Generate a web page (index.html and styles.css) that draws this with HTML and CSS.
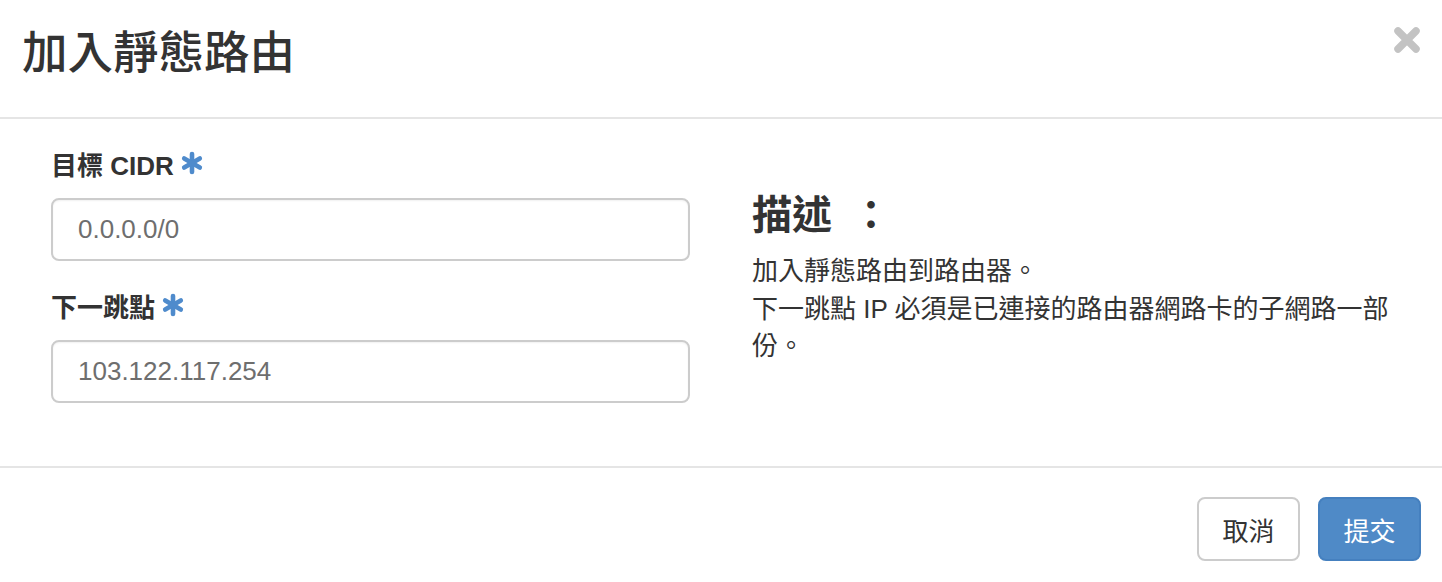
FILE: index.html
```html
<!DOCTYPE html>
<html lang="zh-Hant">
<head>
<meta charset="utf-8">
<title>加入靜態路由</title>
<link rel="stylesheet" href="styles.css">
</head>
<body>
<div class="modal">
  <div class="modal-header">
    <h1 class="modal-title">加入靜態路由</h1>
    <button class="close" type="button" aria-label="Close">
      <svg width="28" height="28" viewBox="0 0 28 28"><path d="M5 5 L23 23 M23 5 L5 23" stroke="#c3c3c3" stroke-width="7.5" stroke-linecap="round" fill="none"/></svg>
    </button>
  </div>
  <div class="modal-body">
    <div class="col-left">
      <div class="form-group">
        <label class="control-label">目標 CIDR<span class="req"><svg width="24" height="24" viewBox="0 0 24 24"><g stroke="#4f8bcc" stroke-width="4.6" stroke-linecap="round"><path d="M12 3 V21"/><path d="M4.2 7.5 L19.8 16.5"/><path d="M4.2 16.5 L19.8 7.5"/></g></svg></span></label>
        <input class="form-control" type="text" value="0.0.0.0/0">
      </div>
      <div class="form-group">
        <label class="control-label">下一跳點<span class="req"><svg width="24" height="24" viewBox="0 0 24 24"><g stroke="#4f8bcc" stroke-width="4.6" stroke-linecap="round"><path d="M12 3 V21"/><path d="M4.2 7.5 L19.8 16.5"/><path d="M4.2 16.5 L19.8 7.5"/></g></svg></span></label>
        <input class="form-control" type="text" value="103.122.117.254">
      </div>
    </div>
    <div class="col-right">
      <h3 class="desc-title">描述<span class="colon">：</span></h3>
      <p class="desc">加入靜態路由到路由器。<br>下一跳點 IP 必須是已連接的路由器網路卡的子網路一部份。</p>
    </div>
  </div>
  <div class="modal-footer">
    <button class="btn btn-default" type="button">取消</button>
    <button class="btn btn-primary" type="button">提交</button>
  </div>
</div>
</body>
</html>
```
FILE: styles.css
```css
* { box-sizing: border-box; }
html, body { margin: 0; padding: 0; background: #fff; }
body {
  font-family: "Liberation Sans", "Noto Sans CJK TC", sans-serif;
  color: #333;
  width: 1442px;
  height: 582px;
  overflow: hidden;
}
.modal { width: 1442px; }
.modal-header {
  height: 119px;
  border-bottom: 2px solid #e5e5e5;
  display: flex;
  justify-content: space-between;
  align-items: flex-start;
  padding: 0 21px 0 22px;
}
.modal-title {
  margin: 0;
  padding-top: 27px;
  font-size: 45.5px;
  line-height: 54px;
  font-weight: 500;
  color: #333;
}
.close {
  margin-top: 26px;
  padding: 0;
  border: 0;
  background: none;
  width: 28px;
  height: 28px;
  cursor: pointer;
}
.close svg { display: block; }
.modal-body {
  height: 347px;
  display: flex;
  gap: 62px;
  padding: 29px 0 0 51px;
}
.col-left { width: 639px; flex: none; }
.col-right { width: 670px; flex: none; padding-top: 45px; }
.form-group { margin-bottom: 29px; }
.control-label {
  display: block;
  font-size: 26px;
  line-height: 37px;
  font-weight: 700;
  margin-bottom: 13px;
  color: #333;
}
.req {
  display: inline-block;
  vertical-align: top;
  margin-left: 6px;
  margin-top: 3px;
  height: 24px;
}
.req svg { display: block; }
.form-control {
  display: block;
  width: 100%;
  height: 63px;
  border: 2px solid #ccc;
  border-radius: 8px;
  padding: 0 25px;
  font-family: "Liberation Sans", "Noto Sans CJK TC", sans-serif;
  font-size: 26px;
  color: #6e6e6e;
  background: #fff;
  box-shadow: inset 0 1px 2px rgba(0,0,0,0.06);
  outline: none;
}
.desc-title {
  margin: 0 0 16px 0;
  font-size: 40px;
  line-height: 44px;
  font-weight: 700;
}
.desc-title .colon { margin-left: 19px; }
.desc {
  margin: 0;
  font-size: 26px;
  line-height: 37.5px;
}
.modal-footer {
  border-top: 2px solid #e5e5e5;
  display: flex;
  justify-content: flex-end;
  gap: 18px;
  padding: 29px 21px 0 0;
}
.btn {
  width: 103px;
  height: 64px;
  border-radius: 8px;
  font-family: "Liberation Sans", "Noto Sans CJK TC", sans-serif;
  font-size: 26px;
  padding: 0;
  cursor: pointer;
}
.btn-default {
  background: #fff;
  border: 2px solid #ccc;
  color: #333;
}
.btn-primary {
  background: #4f8ac7;
  border: 2px solid #4580bf;
  color: #fff;
}
```
